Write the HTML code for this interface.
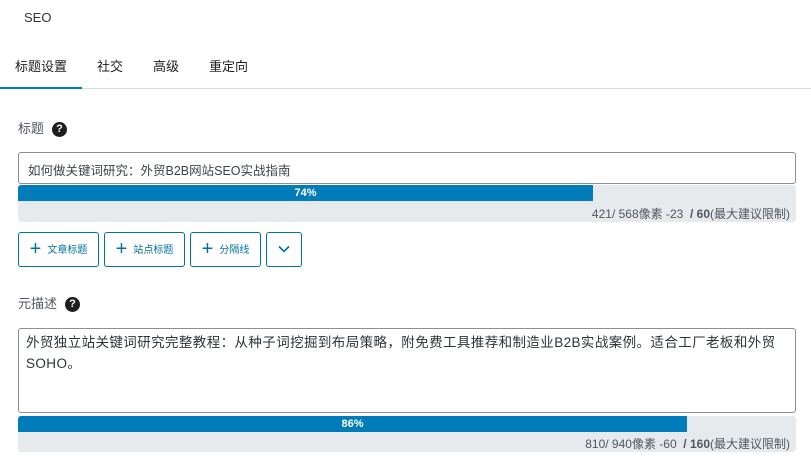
<!DOCTYPE html><html><head><meta charset="utf-8"><style>
body{margin:0;width:811px;height:461px;background:#fff;font-family:"Segoe UI","Liberation Sans","Noto Sans CJK SC",sans-serif;color:#1e1e1e;position:relative;overflow:hidden;font-size:13px}
.a{position:absolute}
.q{display:inline-block;width:15px;height:15px;border-radius:50%;background:#1e1e1e;color:#fff;font-size:11px;font-weight:bold;text-align:center;line-height:15px;vertical-align:middle;margin-left:8px}
.box{border:1px solid #8c8f94;border-radius:3px;background:#fff;box-sizing:border-box}
.bar{background:#e7eaed;border-radius:3px;overflow:hidden}
.fill{background:#007cba;color:#fff;font-size:11px;font-weight:bold;height:16px;line-height:16px;text-align:center}
.btn{border:1px solid #0071a1;border-radius:3px;box-sizing:border-box;height:35px;color:#0071a1;font-size:10px;line-height:33px;text-align:center}
.btn b{font-size:20px;font-weight:normal;margin-right:6px;vertical-align:-2px}
.m{font-size:12px;color:#50575e;text-align:right}
</style></head><body>
<div class="a" style="left:24px;top:10px;font-size:13px;color:#333">SEO</div>
<div class="a" style="left:15px;top:56px">标题设置</div>
<div class="a" style="left:97px;top:56px">社交</div>
<div class="a" style="left:153px;top:56px">高级</div>
<div class="a" style="left:209px;top:56px">重定向</div>
<div class="a" style="left:0;top:88px;width:811px;height:1px;background:#dcdcde"></div>
<div class="a" style="left:0;top:87px;width:82px;height:2px;background:#007cba"></div>
<div class="a" style="left:18px;top:118px;color:#50575e">标题<span class="q">?</span></div>
<div class="a box" style="left:18px;top:152px;width:778px;height:32px;padding:7px 9px;font-size:12.5px;color:#3c434a">如何做关键词研究：外贸B2B网站SEO实战指南</div>
<div class="a bar" style="left:18px;top:185px;width:778px;height:37px"><div class="fill" style="width:575px">74%</div><div class="m" style="padding:4px 6px 0 0">421/ 568像素 -23 &nbsp;<b>/ 60</b>(最大建议限制)</div></div>
<div class="a btn" style="left:18px;top:232px;width:81px"><b>+</b>文章标题</div>
<div class="a btn" style="left:104px;top:232px;width:81px"><b>+</b>站点标题</div>
<div class="a btn" style="left:190px;top:232px;width:71px"><b>+</b>分隔线</div>
<div class="a btn" style="left:266px;top:232px;width:36px"><svg width="12" height="8" viewBox="0 0 12 8" style="vertical-align:middle"><path d="M1 1.5l5 5 5-5" stroke="#0071a1" stroke-width="1.6" fill="none"/></svg></div>
<div class="a" style="left:18px;top:293px;color:#50575e">元描述<span class="q">?</span></div>
<div class="a box" style="left:18px;top:328px;width:778px;height:85px;padding:3px 7px;font-size:13.5px;line-height:21px;letter-spacing:0.4px;color:#2c3338">外贸独立站关键词研究完整教程：从种子词挖掘到布局策略，附免费工具推荐和制造业B2B实战案例。适合工厂老板和外贸<br>SOHO。</div>
<div class="a bar" style="left:18px;top:416px;width:778px;height:36px"><div class="fill" style="width:669px">86%</div><div class="m" style="padding:3px 6px 0 0">810/ 940像素 -60 &nbsp;<b>/ 160</b>(最大建议限制)</div></div>
</body></html>
